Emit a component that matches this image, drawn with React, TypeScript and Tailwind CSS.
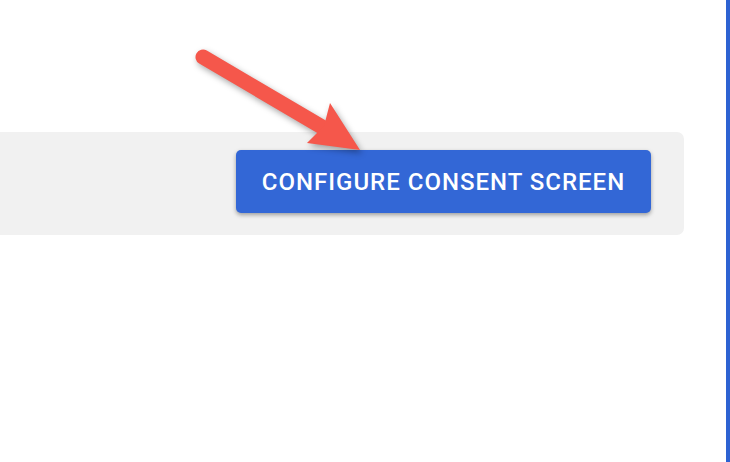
import React from 'react';

export default function App() {
  return (
    <div className="relative flex h-[462px] w-[730px] bg-white overflow-hidden" style={{ fontFamily: 'Roboto, "Liberation Sans", sans-serif' }}>
      <div className="flex-1 pt-[132px] pr-[42px]">
        <div className="flex h-[103px] justify-end rounded-r-[7px] bg-[#f1f1f1] pt-[18px] pr-[33px]">
          <button className="h-[63px] w-[415px] rounded-[5px] bg-[#3367d6] text-[24px] font-medium tracking-[1px] text-white shadow-[0_2px_4px_rgba(0,0,0,0.35)]">
            CONFIGURE CONSENT SCREEN
          </button>
        </div>
      </div>
      <div className="w-[4px] bg-[#2d62d2]" />

      {/* annotation arrow */}
      <svg
        className="absolute left-0 top-0 drop-shadow-[2px_3px_3px_rgba(0,0,0,0.35)]"
        width="730"
        height="462"
        viewBox="0 0 730 462"
      >
        <line x1="203" y1="57" x2="322" y2="127" stroke="#f5574b" strokeWidth="15" strokeLinecap="round" />
        <polygon points="360,150 330,103 324,126 307,143" fill="#f5574b" />
      </svg>
    </div>
  );
}
